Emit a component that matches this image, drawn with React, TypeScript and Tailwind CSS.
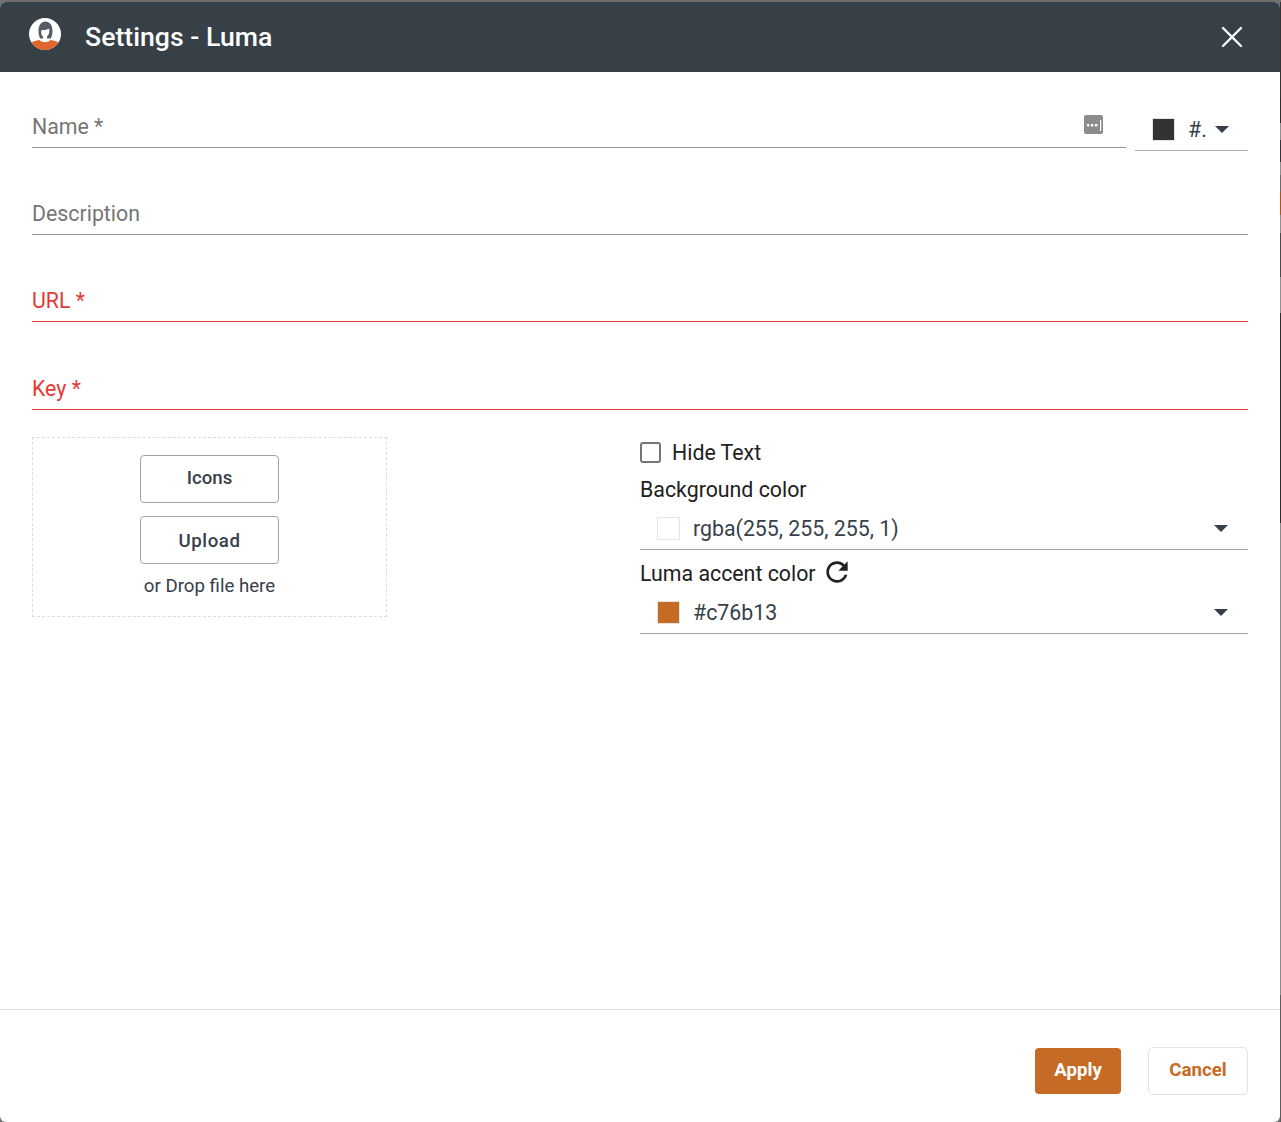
import { X } from 'lucide-react'

// whatever shows behind the dialog along its right edge
const edgeStrip = [
  'h-[95px] bg-[#37352f]',
  'h-[26px] bg-[#2e2e2e]',
  'h-[17px] bg-[#8f8f8f]',
  'h-[22px] bg-[#33353a]',
  'h-[13px] bg-[#8f8f8f]',
  'h-[17px] bg-[#6a6a6a]',
  'h-[23px] bg-[#a8591a]',
  'h-[18px] bg-[#8f8f8f]',
  'h-[44px] bg-[#4a4a4a]',
  'h-[36px] bg-[#8f8f8f]',
  'h-[210px] bg-[#2f2d2a]',
  'h-[472px] bg-[#8a8a8a]',
  'h-[127px] bg-[#5c5c5c]',
]

function Field({ label, error }: { label: string; error?: boolean }) {
  return (
    <div className={`h-[87px] flex items-end pb-[6px] border-b ${error ? 'border-[#e53935]' : 'border-[#949494]'}`}>
      <span className={`text-[21.33px] leading-[28px] ${error ? 'text-[#e53935]' : 'text-[#757575]'}`}>{label}</span>
    </div>
  )
}

function ColorSelect({ swatch, value }: { swatch: string; value: string }) {
  return (
    <div className="h-[46px] flex items-center border-b border-[#a3a3a3] pl-[17px] pr-[20px] pt-[3px]">
      <span className="w-[23px] h-[23px] border border-[#e3e3e3]" style={{ background: swatch }} />
      <span className="ml-[13px] mt-[1px] text-[21.33px] leading-[28px] text-[#37404a]">{value}</span>
      <span className="ml-auto w-0 h-0 border-x-[7px] border-x-transparent border-t-[7px] border-t-[#37404a]" />
    </div>
  )
}

function Avatar() {
  return (
    <svg width="32" height="32" viewBox="0 0 32 32">
      <defs>
        <clipPath id="avatarClip">
          <circle cx="16" cy="16" r="16" />
        </clipPath>
      </defs>
      <g clipPath="url(#avatarClip)">
        <rect width="32" height="32" fill="#fff" />
        {/* hair */}
        <path d="M9.500 13c0-6 2.800-9.500 7-9.500s7 3.500 7 9.500c0 3-.6 5.500-1.800 7.500h-10.400c-1.200-2-1.800-4.500-1.800-7.500z" fill="#565c64" />
        {/* face and neck */}
        <path d="M12.500 12c2 .3 5 .1 7.500-1.500 .8 3 .3 6-2 8v3.500l2 1.500-4 2-4-2 2-1.500v-3.500c-1.800-1.500-2.300-4-1.500-6.500z" fill="#fff" />
        {/* shirt */}
        <path d="M0 32v-6c3-2.500 7-3.500 10.500-4 1.500 1.500 3.500 2.200 5.500 2.200s4-.7 5.500-2.200c3.500.5 7.500 1.500 10.500 4v6z" fill="#e0662c" />
      </g>
    </svg>
  )
}

export default function App() {
  return (
    <div className="w-[1281px] h-[1122px] bg-[#6f6f6f] pt-[2px] font-['Roboto',sans-serif] overflow-hidden flex">
      <div className="w-[1280px] h-[1120px] bg-white rounded-[6px] overflow-hidden flex flex-col">
        {/* Header */}
        <div className="h-[70px] shrink-0 bg-[#373f47] flex items-center pl-[29px] pr-[30px]">
          <div className="-mt-[6px]"><Avatar /></div>
          <h1 className="ml-[24px] text-[26.67px] font-medium leading-[32px] text-white">Settings - Luma</h1>
          <X className="ml-auto text-white" size={36} strokeWidth={1.6} />
        </div>

        {/* Form */}
        <div className="flex-1 px-[32px]">
          <div className="flex gap-[9px]">
            <div className="flex-1 h-[76px] flex items-end justify-between border-b border-[#949494]">
              <span className="pb-[6px] text-[21.33px] leading-[28px] text-[#757575]">Name *</span>
              <svg className="mb-[12px] mr-[22px]" width="20" height="20" viewBox="0 0 20 20">
                <rect width="19" height="19" rx="2" fill="#8c8c8c" />
                <rect x="3" y="9" width="2.4" height="2.4" fill="#fff" />
                <rect x="7" y="9" width="2.4" height="2.4" fill="#fff" />
                <rect x="11" y="9" width="2.4" height="2.4" fill="#fff" />
                <rect x="16" y="5" width="1.2" height="11" fill="#fff" />
              </svg>
            </div>
            <div className="w-[113px] h-[79px] flex items-end border-b border-[#b0b0b0] pl-[17px] pb-[9px]">
              <span className="w-[23px] h-[23px] bg-[#333333] border border-[#e3e3e3]" />
              <span className="ml-[13px] -mb-[1px] text-[21.33px] leading-[24px] text-[#37404a]">#.</span>
              <span className="ml-[8px] mb-[8px] w-0 h-0 border-x-[7px] border-x-transparent border-t-[7px] border-t-[#37404a]" />
            </div>
          </div>
          <div className="-mt-[3px]">
            <Field label="Description" />
            <Field label="URL *" error />
            <div className="h-px" />
            <Field label="Key *" error />
          </div>

          <div className="mt-[27px] flex">
            {/* Upload box */}
            <div className="w-[355px] h-[180px] border border-dashed border-[#dcdcdc] flex flex-col items-center pt-[17px]">
              <button className="w-[139px] h-[48px] pb-[3px] border border-[#a3a3a3] rounded-[4px] text-[18.67px] font-medium text-[#37404a]">Icons</button>
              <button className="mt-[13px] w-[139px] h-[48px] pt-[1px] border border-[#a3a3a3] rounded-[4px] text-[18.67px] font-medium tracking-[0.6px] text-[#37404a]">Upload</button>
              <p className="mt-[10px] text-[18.67px] leading-[24px] text-[#37404a]">or Drop file here</p>
            </div>

            {/* Options */}
            <div className="ml-[253px] w-[608px]">
              <label className="h-[31px] flex items-center">
                <span className="w-[21px] h-[21px] border-2 border-[#757575] rounded-[3px]" />
                <span className="ml-[11px] text-[21.33px] leading-[28px] text-[#212121]">Hide Text</span>
              </label>
              <p className="mt-[8px] text-[21.33px] leading-[28px] text-[#212121]">Background color</p>
              <ColorSelect swatch="#ffffff" value="rgba(255, 255, 255, 1)" />
              <div className="mt-[9px] h-[29px] flex items-center">
                <span className="text-[21.33px] leading-[28px] text-[#212121]">Luma accent color</span>
                <svg className="ml-[5px] -mt-[3px]" width="32" height="32" viewBox="0 0 24 24" fill="#212121">
                  <path d="M17.65 6.35C16.2 4.9 14.21 4 12 4c-4.420 0-7.990 3.580-7.990 8s3.570 8 7.990 8c3.730 0 6.840-2.550 7.730-6h-2.080c-.82 2.330-3.040 4-5.650 4-3.310 0-6-2.690-6-6s2.690-6 6-6c1.660 0 3.140.69 4.220 1.780L13 11h7V4l-2.350 2.350z" />
                </svg>
              </div>
              <ColorSelect swatch="#c66b25" value="#c76b13" />
            </div>
          </div>
        </div>

        {/* Footer */}
        <div className="h-[113px] shrink-0 border-t border-[#e0e0e0] flex items-center justify-end pr-[32px] pt-[9px]">
          <button className="w-[86px] h-[46px] pb-[2px] rounded-[4px] bg-[#c66b25] text-[18.67px] font-bold text-white">Apply</button>
          <button className="ml-[27px] w-[100px] h-[48px] pb-[2px] rounded-[5px] border border-[#e3e3e3] text-[18.67px] font-bold text-[#c66b25]">Cancel</button>
        </div>
      </div>

      <div className="w-px flex flex-col">
        {edgeStrip.map((segment, i) => (
          <div key={i} className={segment} />
        ))}
      </div>
    </div>
  )
}
